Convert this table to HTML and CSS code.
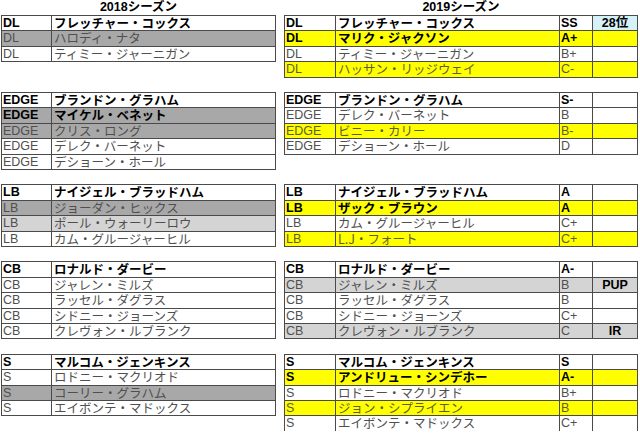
FILE: index.html
```html
<!DOCTYPE html>
<html lang="ja">
<head>
<meta charset="utf-8">
<title>2018 / 2019 シーズン</title>
<link rel="stylesheet" href="styles.css">
</head>
<body>
<div class="sheet">
  <div class="title">2018シーズン</div>
  <div class="title">2019シーズン</div>

  <div class="tbl">
    <div class="r b"><div class="c">DL</div><div class="c">フレッチャー・コックス</div></div>
    <div class="r dk"><div class="c">DL</div><div class="c">ハロディ・ナタ</div></div>
    <div class="r"><div class="c">DL</div><div class="c">ティミー・ジャーニガン</div></div>
  </div>
  <div class="tbl wide">
    <div class="r b"><div class="c">DL</div><div class="c">フレッチャー・コックス</div><div class="c">SS</div><div class="c ctr cy">28位</div></div>
    <div class="r b y"><div class="c">DL</div><div class="c">マリク・ジャクソン</div><div class="c">A+</div><div class="c"></div></div>
    <div class="r"><div class="c">DL</div><div class="c">ティミー・ジャーニガン</div><div class="c">B+</div><div class="c"></div></div>
    <div class="r y"><div class="c">DL</div><div class="c">ハッサン・リッジウェイ</div><div class="c">C-</div><div class="c"></div></div>
  </div>

  <div class="tbl">
    <div class="r b"><div class="c">EDGE</div><div class="c">ブランドン・グラハム</div></div>
    <div class="r b dk"><div class="c">EDGE</div><div class="c">マイケル・ベネット</div></div>
    <div class="r dk"><div class="c">EDGE</div><div class="c">クリス・ロング</div></div>
    <div class="r"><div class="c">EDGE</div><div class="c">デレク・バーネット</div></div>
    <div class="r"><div class="c">EDGE</div><div class="c">デショーン・ホール</div></div>
  </div>
  <div class="tbl wide">
    <div class="r b"><div class="c">EDGE</div><div class="c">ブランドン・グラハム</div><div class="c">S-</div><div class="c"></div></div>
    <div class="r"><div class="c">EDGE</div><div class="c">デレク・バーネット</div><div class="c">B</div><div class="c"></div></div>
    <div class="r y"><div class="c">EDGE</div><div class="c">ビニー・カリー</div><div class="c">B-</div><div class="c"></div></div>
    <div class="r"><div class="c">EDGE</div><div class="c">デショーン・ホール</div><div class="c">D</div><div class="c"></div></div>
  </div>

  <div class="tbl">
    <div class="r b"><div class="c">LB</div><div class="c">ナイジェル・ブラッドハム</div></div>
    <div class="r dk"><div class="c">LB</div><div class="c">ジョーダン・ヒックス</div></div>
    <div class="r lt"><div class="c">LB</div><div class="c">ポール・ウォーリーロウ</div></div>
    <div class="r"><div class="c">LB</div><div class="c">カム・グルージャーヒル</div></div>
  </div>
  <div class="tbl wide">
    <div class="r b"><div class="c">LB</div><div class="c">ナイジェル・ブラッドハム</div><div class="c">A</div><div class="c"></div></div>
    <div class="r b y"><div class="c">LB</div><div class="c">ザック・ブラウン</div><div class="c">A</div><div class="c"></div></div>
    <div class="r"><div class="c">LB</div><div class="c">カム・グルージャーヒル</div><div class="c">C+</div><div class="c"></div></div>
    <div class="r y"><div class="c">LB</div><div class="c">L.J・フォート</div><div class="c">C+</div><div class="c"></div></div>
  </div>

  <div class="tbl">
    <div class="r b"><div class="c">CB</div><div class="c">ロナルド・ダービー</div></div>
    <div class="r"><div class="c">CB</div><div class="c">ジャレン・ミルズ</div></div>
    <div class="r"><div class="c">CB</div><div class="c">ラッセル・ダグラス</div></div>
    <div class="r"><div class="c">CB</div><div class="c">シドニー・ジョーンズ</div></div>
    <div class="r"><div class="c">CB</div><div class="c">クレヴォン・ルブランク</div></div>
  </div>
  <div class="tbl wide">
    <div class="r b"><div class="c">CB</div><div class="c">ロナルド・ダービー</div><div class="c">A-</div><div class="c"></div></div>
    <div class="r lt"><div class="c">CB</div><div class="c">ジャレン・ミルズ</div><div class="c">B</div><div class="c ctr">PUP</div></div>
    <div class="r"><div class="c">CB</div><div class="c">ラッセル・ダグラス</div><div class="c">B</div><div class="c"></div></div>
    <div class="r"><div class="c">CB</div><div class="c">シドニー・ジョーンズ</div><div class="c">C+</div><div class="c"></div></div>
    <div class="r lt"><div class="c">CB</div><div class="c">クレヴォン・ルブランク</div><div class="c">C</div><div class="c ctr">IR</div></div>
  </div>

  <div class="tbl">
    <div class="r b"><div class="c">S</div><div class="c">マルコム・ジェンキンス</div></div>
    <div class="r"><div class="c">S</div><div class="c">ロドニー・マクリオド</div></div>
    <div class="r dk"><div class="c">S</div><div class="c">コーリー・グラハム</div></div>
    <div class="r"><div class="c">S</div><div class="c">エイボンテ・マドックス</div></div>
  </div>
  <div class="tbl wide">
    <div class="r b"><div class="c">S</div><div class="c">マルコム・ジェンキンス</div><div class="c">S</div><div class="c"></div></div>
    <div class="r b y"><div class="c">S</div><div class="c">アンドリュー・シンデホー</div><div class="c">A-</div><div class="c"></div></div>
    <div class="r"><div class="c">S</div><div class="c">ロドニー・マクリオド</div><div class="c">B+</div><div class="c"></div></div>
    <div class="r y"><div class="c">S</div><div class="c">ジョン・シプライエン</div><div class="c">B</div><div class="c"></div></div>
    <div class="r"><div class="c">S</div><div class="c">エイボンテ・マドックス</div><div class="c">C+</div><div class="c"></div></div>
  </div>
</div>
</body>
</html>
```

FILE: styles.css
```css
html, body {
  margin: 0;
  padding: 0;
  background: #ffffff;
}

body {
  font-family: "Liberation Sans", "Noto Sans CJK JP", sans-serif;
  font-size: 12.5px;
  color: #4f4f4f;
}

.sheet {
  display: grid;
  grid-template-columns: 275px 354px;
  grid-template-rows: 15px 77px 92.4px 77px 92.4px 77px;
  column-gap: 8px;
  padding-left: 1px;
  align-items: start;
}

.title {
  height: 15px;
  line-height: 15px;
  text-align: center;
  font-weight: 700;
  color: #000;
}

.tbl {
  border-top: 1px solid #4a4a4a;
  border-left: 1px solid #4a4a4a;
  background: #fff;
}

.r {
  display: grid;
  grid-template-columns: 50px 224px;
  height: 15.4px;
  box-sizing: border-box;
  border-bottom: 1px solid #4a4a4a;
}

.wide .r {
  grid-template-columns: 51px 224px 33px 45px;
}

.c {
  box-sizing: border-box;
  border-right: 1px solid #4a4a4a;
  padding-left: 1px;
  line-height: 14.4px;
  white-space: nowrap;
}

.r > .c:nth-child(2) {
  font-family: "Noto Sans CJK JP", "Liberation Sans", sans-serif;
  padding-left: 2px;
}

.b {
  font-weight: 700;
  color: #000;
}

.dk {
  background: #a8a8a8;
}

.lt {
  background: #d4d4d4;
}

.y {
  background: #ffff00;
  color: #5e5e2c;
}

.y.b {
  color: #000;
}

.cy {
  background: #d5f1fa;
}

.ctr {
  text-align: center;
  font-weight: 700;
  color: #000;
  padding-left: 0;
}
```
